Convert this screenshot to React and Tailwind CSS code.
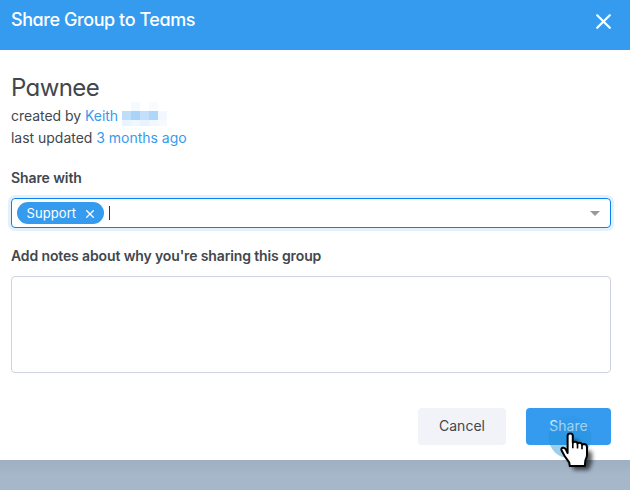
const blurTiles = [
  'bg-white', 'bg-[#f4fafe]', 'bg-white', 'bg-[#f8fcff]', 'bg-white',
  'bg-[#bfdefa]', 'bg-[#a9d3f7]', 'bg-[#c3dffb]', 'bg-[#afd5f8]', 'bg-[#f2f8fe]',
  'bg-[#e9f5fe]', 'bg-[#f0f8fe]', 'bg-[#e8f3fe]', 'bg-[#f0f7fe]', 'bg-[#f6faff]',
];

function HandCursor() {
  return (
    <svg className="absolute left-[540px] top-[410px]" width="70" height="70" viewBox="540 410 70 70">
      <defs>
        <filter id="soft" x="-50%" y="-50%" width="200%" height="200%">
          <feGaussianBlur stdDeviation="2.2" />
        </filter>
        <linearGradient id="halo" x1="0" y1="0" x2="0" y2="1">
          <stop offset="0" stopColor="#1e8fd2" stopOpacity="0.12" />
          <stop offset="0.5" stopColor="#1e8fd2" stopOpacity="0.42" />
          <stop offset="1" stopColor="#1e93d8" stopOpacity="0.45" />
        </linearGradient>
      </defs>
      <circle cx="570" cy="437" r="21.5" fill="url(#halo)" />
      <path d="M568 437h6v8l14 4v10l-3 8h-15l-8-15 5-1z" transform="translate(4 3)" fill="#000" fillOpacity="0.65" filter="url(#soft)" />
      <path
        d="M567.6 453V435.8q0-2.4 2.6-2.4t2.6 2.4v6.8q.5-.8 2.2-.8 2.2 0 2.5 1.7.6-.7 2-.7 2.2 0 2.6 1.9.6-.7 1.9-.7 3 .2 3 3.2v7.6q0 3-1.6 5.4l-.6 5.9H569.8l-.6-3.8-4.6-6.3-3-5.4q-.8-2.2.9-2.8 1.8-.5 3 1.1z"
        fill="#fff" stroke="#000" strokeWidth="2" strokeLinejoin="round"
      />
      <path d="M572.8 443v5.2M577.5 444v4.6M582 445v4.2" stroke="#000" strokeWidth="1.6" fill="none" />
    </svg>
  );
}

export default function App() {
  return (
    <div className="relative flex h-[490px] w-[630px] flex-col overflow-hidden bg-[#a5b6c9] font-['Inter',sans-serif] text-[#42474d]">
      <header className="flex h-[50px] shrink-0 justify-between bg-[#359bef] pl-[11px] pr-[19px] text-white">
        <h1 className="mt-[8px] whitespace-nowrap text-[18px] font-medium leading-6 tracking-[-0.43px] [font-feature-settings:'cv11']">Share Group to Teams</h1>
        <svg className="mt-[14px]" width="15" height="15" viewBox="0 0 15 15" stroke="currentColor" strokeWidth="2.2" strokeLinecap="round">
          <path d="M1.2 1.2l12.6 12.6M13.8 1.2L1.2 13.8" />
        </svg>
      </header>
      <main className="flex h-[410px] shrink-0 flex-col bg-white pl-[11px] pr-[19px] text-[14px]">
        <h2 className="mt-[22px] h-[32px] whitespace-nowrap text-[24px] leading-8 tracking-[-0.6px] [font-feature-settings:'cv11']"><span>Pawnee</span></h2>
        <div className="mt-[1px] flex h-[22px] items-center whitespace-nowrap leading-[22px]">
          <span className="tracking-[-0.04px]">created by <span className="text-[#359bef]">Keith</span></span>
          <span className="mb-[4px] ml-[4px] grid w-[45px] grid-cols-5 grid-rows-[9px_9px_6px]">
            {blurTiles.map((c, i) => <i key={i} className={c} />)}
          </span>
        </div>
        <p className="h-[22px] whitespace-nowrap leading-[22px] tracking-[-0.02px]"><span>last updated <span className="text-[#359bef]">3 months ago</span></span></p>
        <label className="mt-[18px] h-[22px] whitespace-nowrap font-semibold leading-[22px] tracking-[-0.1px]"><span>Share with</span></label>
        <div className="mt-[9px] flex h-[30px] shrink-0 items-center rounded-[4px] border border-[#0a80f5] pl-[5px] pr-[10px] shadow-[0_0_0_3px_#e3f1fd]">
          <span className="flex h-[22px] w-[87px] items-center justify-between rounded-full bg-[#359bef] pl-[9.5px] pr-[10px] text-[13px] leading-5 text-white">
            <span className="mb-[1px] tracking-[0.08px]">Support</span>
            <svg className="mt-[2px]" width="8" height="8" viewBox="0 0 8 8" stroke="currentColor" strokeWidth="1.3"><path d="M.3.3l7.4 7.4M7.7.3L.3 7.7" /></svg>
          </span>
          <span className="ml-[5px] h-[14px] w-px bg-[#33383d]" />
          <svg className="ml-auto" width="10" height="5" viewBox="0 0 10 5" fill="#999"><path d="M0 0h10L5 5z" /></svg>
        </div>
        <label className="mt-[17px] h-[22px] whitespace-nowrap font-semibold leading-[22px] tracking-[-0.13px]"><span>Add notes about why you're sharing this group</span></label>
        <textarea className="mt-[9px] block h-[97px] w-[600px] shrink-0 resize-none rounded-[4px] border border-[#cfd2e1] bg-white p-2 outline-none" />
        <div className="mt-[35px] flex justify-end gap-[20px]">
          <button className="h-[37px] w-[88px] rounded-[4px] bg-[#f2f3f8] pb-[2px]">Cancel</button>
          <button className="h-[37px] w-[85px] rounded-[4px] bg-[#359bef] pb-[2px] text-[#d3eafc]">Share</button>
        </div>
      </main>
      <div className="h-[30px] shrink-0 bg-linear-to-b from-[#9dafc1] to-[#a6b7ca] to-50%" />
      <HandCursor />
    </div>
  );
}
